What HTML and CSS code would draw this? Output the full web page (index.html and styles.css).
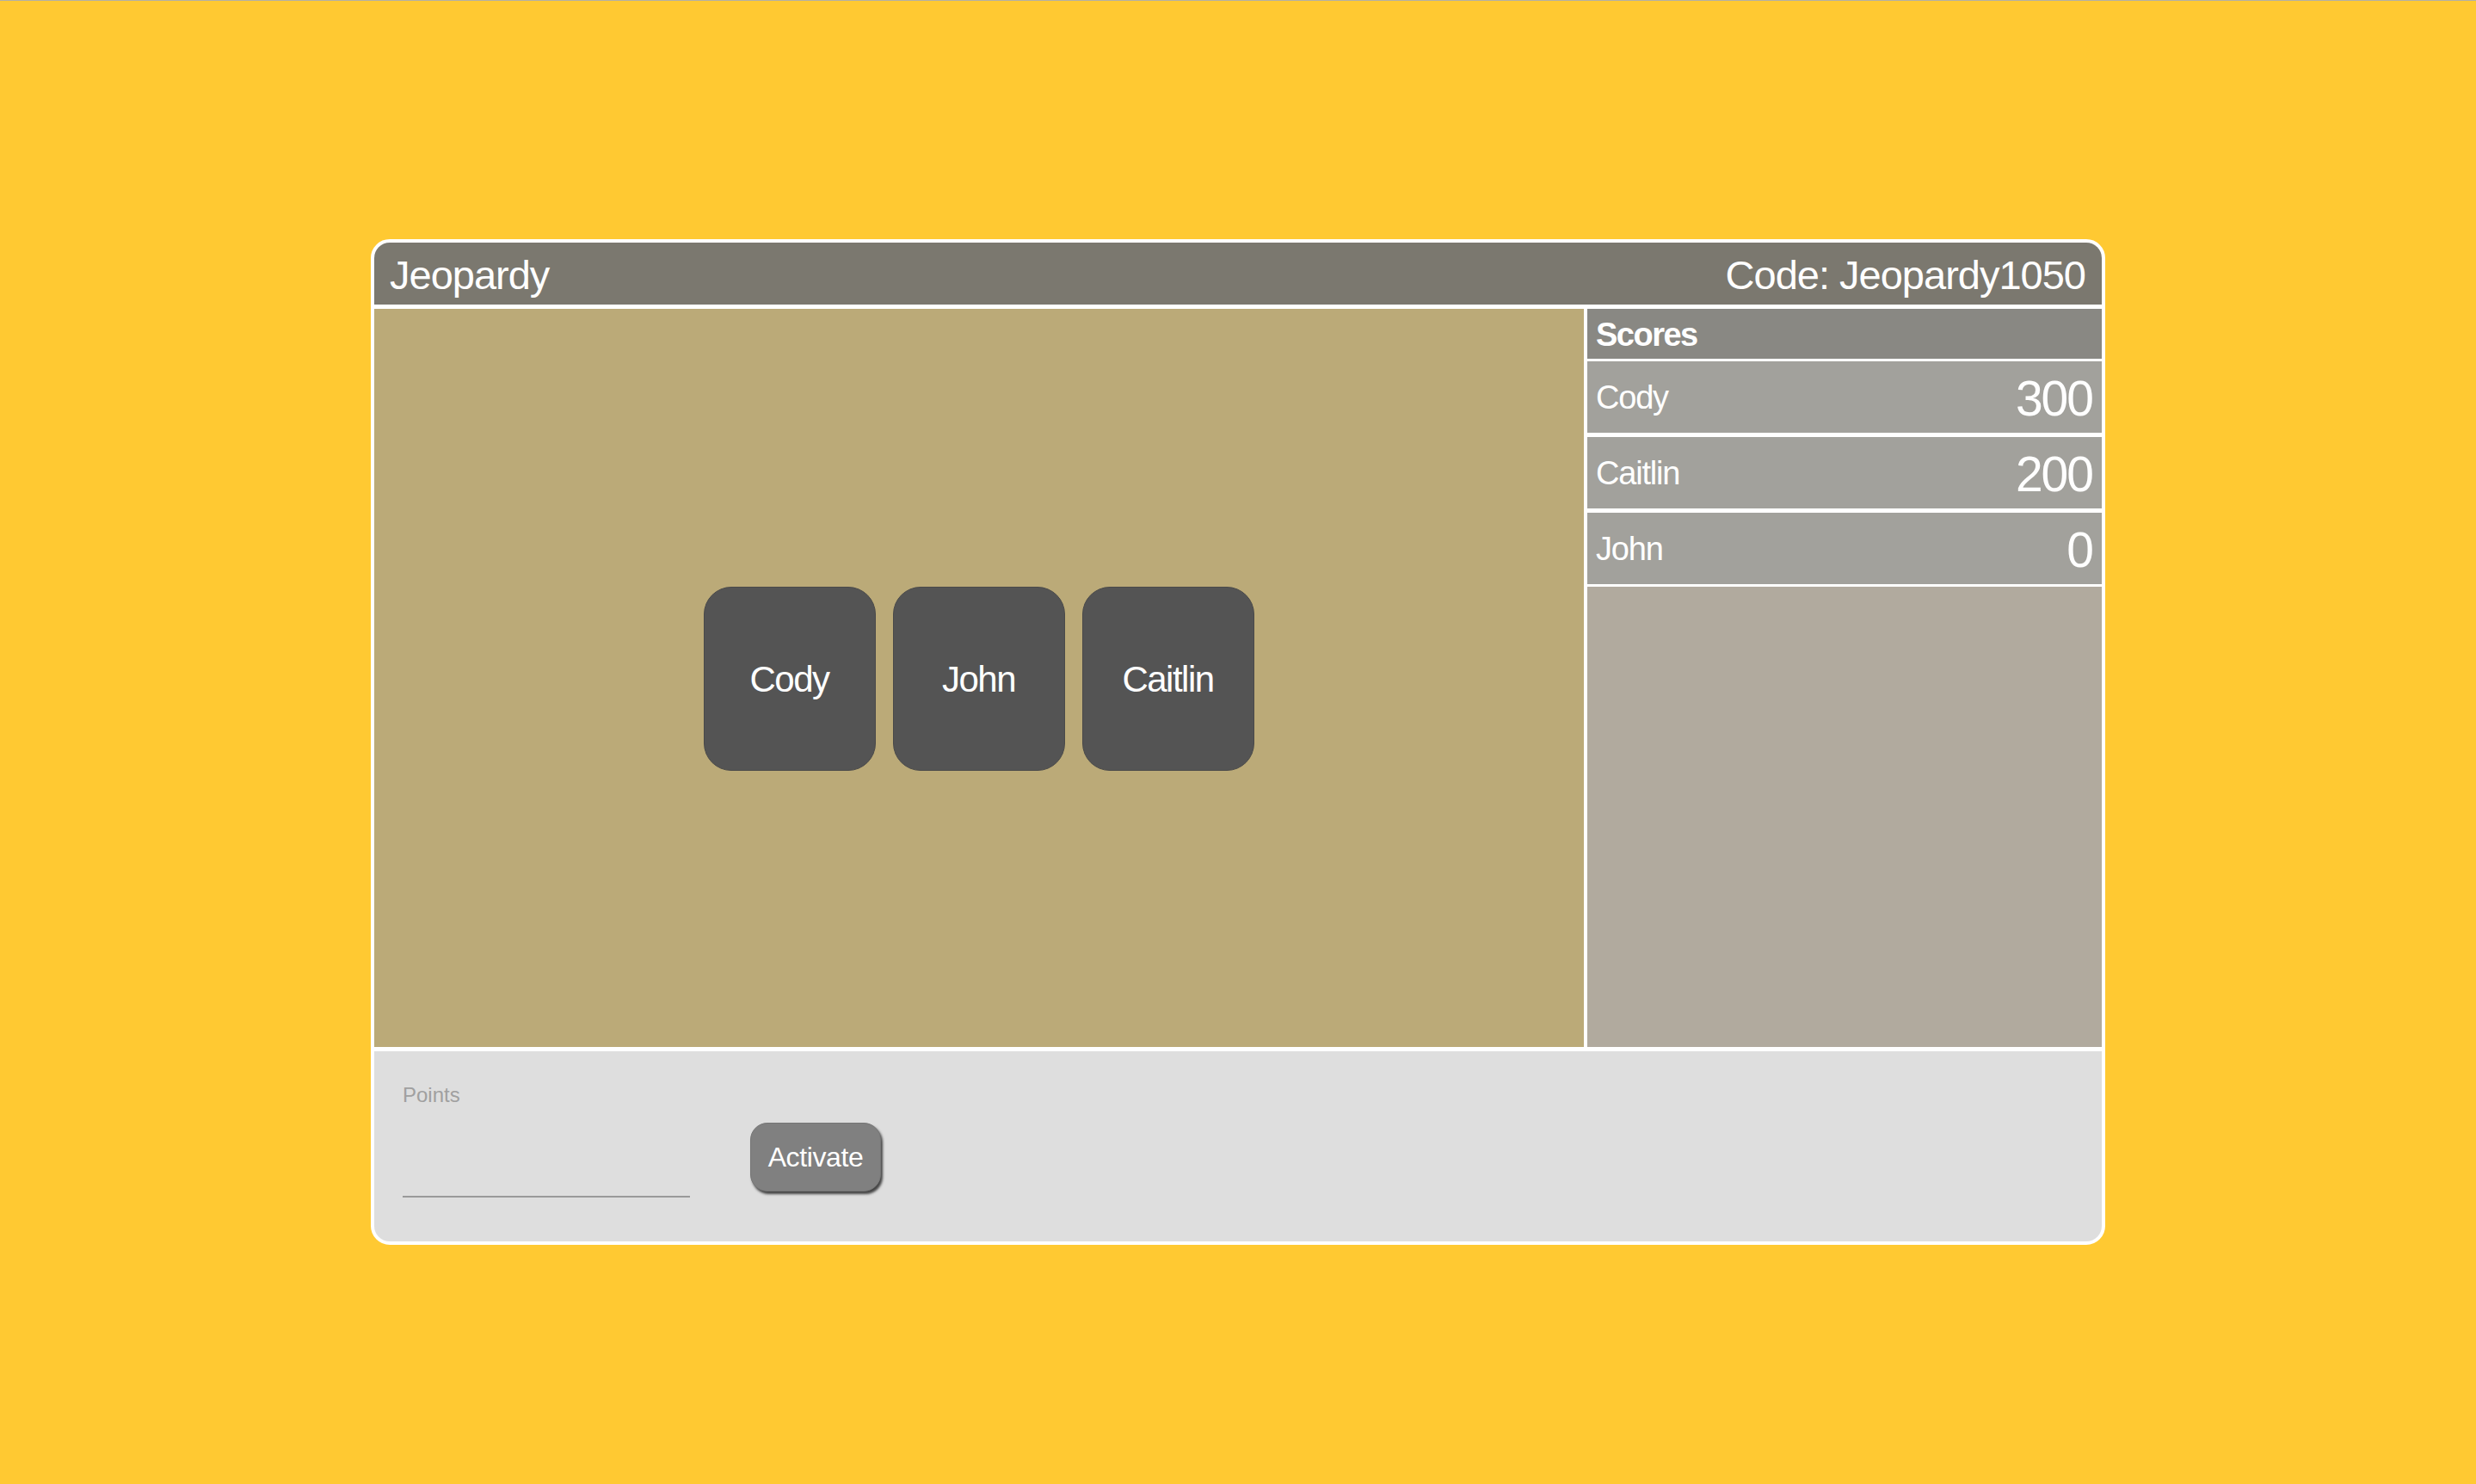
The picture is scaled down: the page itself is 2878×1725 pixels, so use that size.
FILE: index.html
```html
<!DOCTYPE html>
<html lang="en">
<head>
<meta charset="utf-8">
<title>Jeopardy</title>
<link rel="stylesheet" href="styles.css">
</head>
<body>
<div class="page">
  <div class="panel">
    <div class="header">
      <span class="title">Jeopardy</span>
      <span class="code">Code: Jeopardy1050</span>
    </div>
    <div class="main">
      <div class="stage">
        <div class="buzzers">
          <div class="buzzer">Cody</div>
          <div class="buzzer">John</div>
          <div class="buzzer">Caitlin</div>
        </div>
      </div>
      <div class="scores">
        <div class="scores-head">Scores</div>
        <div class="score-row"><span class="name">Cody</span><span class="pts">300</span></div>
        <div class="score-row"><span class="name">Caitlin</span><span class="pts">200</span></div>
        <div class="score-row last"><span class="name">John</span><span class="pts">0</span></div>
        <div class="scores-fill"></div>
      </div>
    </div>
    <div class="controls">
      <div class="field">
        <label class="field-label" for="points">Points</label>
        <input class="field-input" id="points" type="text">
      </div>
      <button class="activate" type="button">Activate</button>
    </div>
  </div>
</div>
</body>
</html>
```

FILE: styles.css
```css
html, body {
  margin: 0;
  padding: 0;
}
body {
  background: #ffc932;
  font-family: "Liberation Sans", Arial, Helvetica, sans-serif;
  color: #fff;
  border-top: 1px solid #b4b0a4;
}
.page {
  height: 1724px;
  display: flex;
  align-items: center;
  justify-content: center;
}
.panel {
  width: 2008px;
  height: 1161px;
  border: 4px solid #fff;
  border-radius: 22px;
  overflow: hidden;
  display: flex;
  flex-direction: column;
  background: #fff;
  margin-top: -1px;
}
.header {
  height: 72px;
  flex: none;
  background: #7b786f;
  display: flex;
  align-items: center;
  justify-content: space-between;
  padding: 2px 19px 0 18px;
  box-sizing: border-box;
  font-size: 47px;
  letter-spacing: -1px;
  margin-bottom: 5px;
}
.main {
  height: 858px;
  flex: none;
  display: flex;
  margin-bottom: 5px;
}
.stage {
  width: 1406px;
  flex: none;
  background: #bbaa78;
  display: flex;
  align-items: center;
  justify-content: center;
  margin-right: 4px;
}
.buzzers {
  display: flex;
  gap: 20px;
  margin-left: -1px;
  margin-top: 1px;
}
.buzzer {
  width: 198px;
  height: 209px;
  background: #545454;
  border: 1px solid #4a4a4a;
  border-radius: 32px;
  display: flex;
  align-items: center;
  justify-content: center;
  font-size: 42px;
  letter-spacing: -1.5px;
  padding-top: 3px;
  box-sizing: content-box;
}
.scores {
  flex: 1;
  display: flex;
  flex-direction: column;
  background: #fff;
}
.scores-head {
  height: 58px;
  flex: none;
  background: #898883;
  display: flex;
  align-items: center;
  padding: 2px 10px 0;
  box-sizing: border-box;
  font-weight: bold;
  font-size: 38px;
  letter-spacing: -1.5px;
}
.score-row {
  height: 81px;
  flex: none;
  background: #a2a19c;
  display: flex;
  align-items: center;
  justify-content: space-between;
  padding: 2px 11px 0 10px;
  box-sizing: content-box;
  border-top: 3px solid #fff;
  border-bottom: 2px solid #fff;
}
.score-row.last {
  border-bottom-width: 3px;
}
.name {
  font-size: 38px;
  letter-spacing: -1.2px;
}
.pts {
  font-size: 57px;
  letter-spacing: -2px;
}
.scores-fill {
  flex: 1;
  background: #b1aa9e;
}
.controls {
  flex: 1;
  background: #dedede;
  display: flex;
  align-items: flex-start;
  padding: 37px 33px 0;
}
.field {
  display: flex;
  flex-direction: column;
}
.field-label {
  font-size: 24px;
  line-height: 28px;
  color: #a0a0a0;
}
.field-input {
  width: 334px;
  height: 62px;
  box-sizing: border-box;
  margin: 43px 0 0;
  border: none;
  border-bottom: 2px solid #9a9a9a;
  background: transparent;
  outline: none;
  font-family: inherit;
  font-size: 30px;
  padding: 0;
}
.activate {
  margin: 46px 0 0 70px;
  width: 152px;
  height: 80px;
  border: 1px solid #767676;
  border-radius: 20px;
  background: #808080;
  color: #fff;
  font-family: inherit;
  font-size: 32px;
  letter-spacing: -0.4px;
  padding: 0;
  box-shadow: 2px 3px 3px rgba(0, 0, 0, 0.7);
}
```
